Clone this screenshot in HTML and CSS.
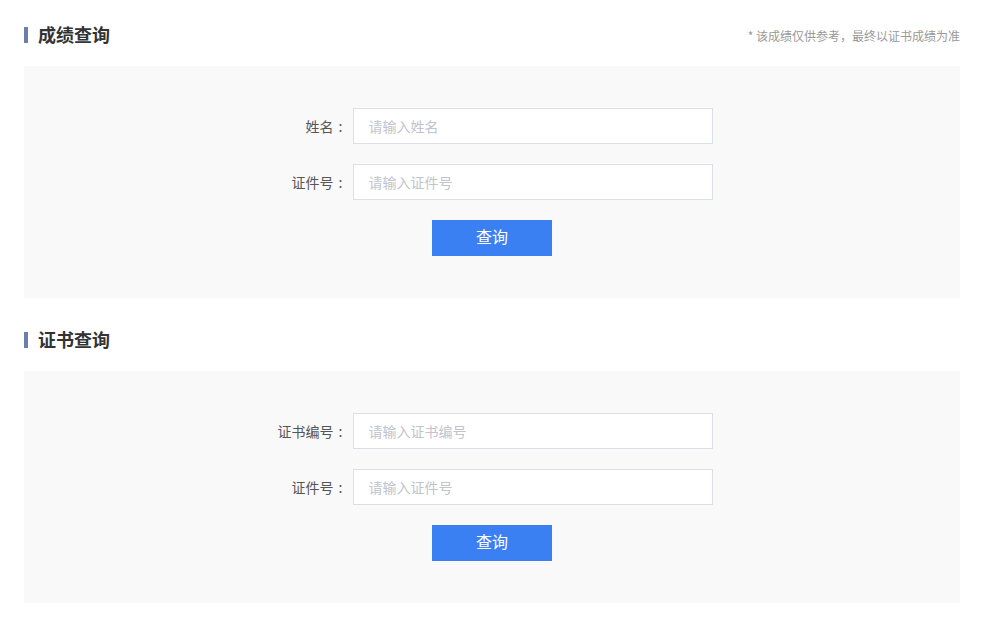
FILE: index.html
```html
<!DOCTYPE html>
<html lang="zh-CN">
<head>
    <meta charset="UTF-8">
    <meta name="viewport" content="width=device-width, initial-scale=1.0">
    <title>成绩查询</title>
    <link rel="stylesheet" href="styles.css">
</head>
<body>
<div class="page">

    <!-- 成绩查询 -->
    <section class="query">
        <div class="query-head">
            <h2 class="query-title">成绩查询</h2>
            <span class="query-note">* 该成绩仅供参考，最终以证书成绩为准</span>
        </div>
        <form class="query-panel">
            <div class="form-row">
                <label class="form-label" for="name">姓名</label>
                <input class="form-input" type="text" id="name" placeholder="请输入姓名">
            </div>
            <div class="form-row">
                <label class="form-label" for="idNo">证件号</label>
                <input class="form-input" type="text" id="idNo" placeholder="请输入证件号">
            </div>
            <button class="query-btn" type="button">查询</button>
        </form>
    </section>

    <!-- 证书查询 -->
    <section class="query">
        <div class="query-head">
            <h2 class="query-title">证书查询</h2>
        </div>
        <form class="query-panel">
            <div class="form-row">
                <label class="form-label" for="certNo">证书编号</label>
                <input class="form-input" type="text" id="certNo" placeholder="请输入证书编号">
            </div>
            <div class="form-row">
                <label class="form-label" for="certIdNo">证件号</label>
                <input class="form-input" type="text" id="certIdNo" placeholder="请输入证件号">
            </div>
            <button class="query-btn" type="button">查询</button>
        </form>
    </section>

</div>
</body>
</html>
```

FILE: styles.css
```css
/* General */
body {
    margin: 0;
    padding: 0;
    background: #fff;
    font-family: "Microsoft YaHei", "Noto Sans CJK SC", sans-serif;
    color: #333;
}

.page {
    width: 936px;
    padding: 24px 0 0 24px;
}

/* Section */
.query + .query {
    margin-top: 31px;
}

.query-head {
    display: flex;
    justify-content: space-between;
    align-items: center;
    height: 22px;
    margin-bottom: 20px;
}

.query-title {
    margin: 0;
    padding-left: 10px;
    border-left: 4px solid #6b7fa9;
    height: 16px;
    line-height: 15px;
    font-size: 18px;
    font-weight: bold;
    color: #333;
}

.query-note {
    font-size: 12px;
    color: #999;
}

/* Panel */
.query-panel {
    display: flex;
    flex-direction: column;
    align-items: center;
    gap: 20px;
    margin: 0;
    padding: 42px 0;
    background: #f9f9f9;
}

.form-row {
    display: flex;
    align-items: center;
}

.form-label {
    width: 76px;
    margin-right: 5px;
    text-align: right;
    font-size: 14px;
    color: #555;
}

/* colon sits centred in a full-width cell */
.form-label::after {
    content: ":";
    display: inline-block;
    width: 14px;
    text-align: center;
}

.form-input {
    box-sizing: border-box;
    width: 360px;
    height: 36px;
    padding: 0 15px;
    border: 1px solid #dddfe6;
    background: #fff;
    font-family: inherit;
    font-size: 14px;
    color: #333;
    outline: none;
}

.form-input::placeholder {
    color: #c0c4cc;
}

.form-input:focus {
    border-color: #3a80f2;
}

/* Button */
.query-btn {
    width: 120px;
    height: 36px;
    padding: 0 0 4px;
    border: none;
    background: #3a80f2;
    color: #fff;
    font-family: inherit;
    font-size: 16px;
    cursor: pointer;
}

.query-btn:hover {
    background: #5a95f5;
}
```
